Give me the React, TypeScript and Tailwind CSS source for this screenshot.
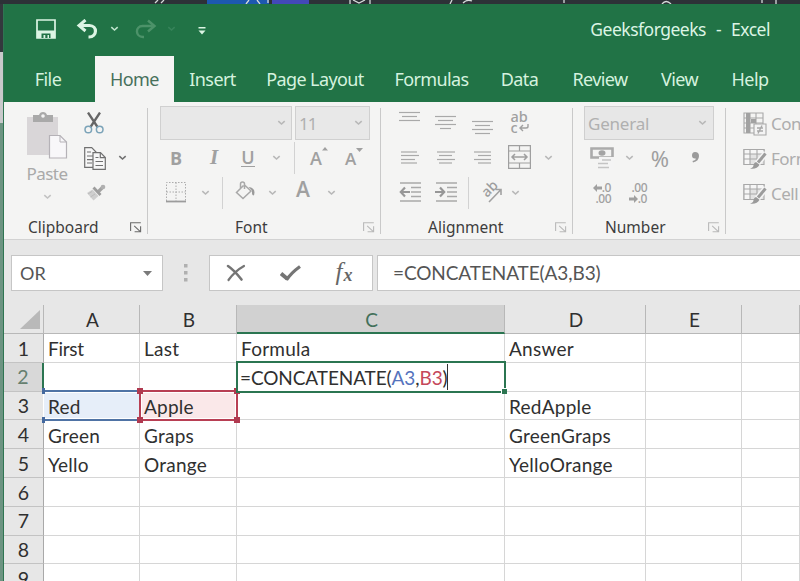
import type { ReactNode } from 'react'
import clsx from 'clsx'

const TABS = [
  { label: 'File', className: 'w-[91px] pr-[3px]' },
  { label: 'Home', className: 'w-[79px] bg-[#f4f4f3] text-[#47705b]', active: true },
  { label: 'Insert', className: 'w-[77px]' },
  { label: 'Page Layout', className: 'w-[128px]' },
  { label: 'Formulas', className: 'w-[105px]' },
  { label: 'Data', className: 'w-[71px]' },
  { label: 'Review', className: 'w-[90px]' },
  { label: 'View', className: 'w-[69px]' },
  { label: 'Help', className: 'w-[72px]' },
]

const COLUMNS = ['A', 'B', 'C', 'D', 'E', '']

const ROWS = [
  ['First', 'Last', 'Formula', 'Answer', '', ''],
  ['', '', '', '', '', ''],
  ['Red', 'Apple', '', 'RedApple', '', ''],
  ['Green', 'Graps', '', 'GreenGraps', '', ''],
  ['Yello', 'Orange', '', 'YelloOrange', '', ''],
  ['', '', '', '', '', ''],
  ['', '', '', '', '', ''],
  ['', '', '', '', '', ''],
  ['', '', '', '', '', ''],
]

const GRID = 'grid grid-cols-[40px_96px_97px_268px_141px_96px_58px]'

/* ---------- small building blocks ---------- */

function Chevron({ className = 'text-[#b8b8b8]' }: { className?: string }) {
  return (
    <svg width="9" height="6" viewBox="0 0 9 6" className={className} fill="none" stroke="currentColor" strokeWidth="1.600">
      <path d="M1.300 1.200l3.200 2.800 3.200-2.800" />
    </svg>
  )
}

function Slot({ className, children }: { className: string; children?: ReactNode }) {
  return <div className={clsx('flex h-full shrink-0 items-center justify-center', className)}>{children}</div>
}

function Divider() {
  return <div className="h-[32px] w-px bg-[#d2d2d2]" />
}

function Launcher({ className }: { className: string }) {
  return (
    <svg width="12" height="11" viewBox="0 0 12 11" className={className} fill="none" stroke="currentColor" strokeWidth="1.100">
      <path d="M.6 9V.8h10.200M4.200 3.800l5.600 5.400M10.600 4.200v5.600H4.600" />
    </svg>
  )
}

interface GroupProps {
  label: string
  className: string
  labelClass: string
  launcherClass?: string
  children: ReactNode
}

function Group({ label, className, labelClass, launcherClass = 'text-[#b9b9b9]', children }: GroupProps) {
  return (
    <div className={clsx('flex shrink-0 flex-col pt-1', className)}>
      {children}
      <div className="flex h-[29px] items-center justify-between pt-[6px] pr-[5px]">
        <span className={clsx("font-['Noto_Sans'] text-[15.5px] leading-none whitespace-nowrap text-[#3d3d3d]", labelClass)}>
          {label}
        </span>
        <Launcher className={launcherClass} />
      </div>
    </div>
  )
}

function GroupSeparator() {
  return <div className="mt-[6px] h-[126px] w-px shrink-0 bg-[#c9c9c9]" />
}

function Lines({ rows, height = 34 }: { rows: [number, number, number][]; height?: number }) {
  return (
    <svg width="24" height={height} viewBox={`0 0 24 ${height}`} className="text-[#a9a9a9]" stroke="currentColor" strokeWidth="1.200">
      {rows.map(([x1, x2, y]) => (
        <path key={y} d={`M${x1} ${y}H${x2}`} />
      ))}
    </svg>
  )
}

/* ---------- title bar ---------- */

function DesktopStrip() {
  return (
    <svg width="800" height="4" viewBox="0 0 800 4" className="block shrink-0" fill="none" stroke="#d6dada" strokeWidth="1.300">
      <path fill="#2d3137" stroke="none" d="M0 0h800v4H0z" />
      <path fill="#1d58b0" stroke="none" d="M207 0h62v4h-62z" />
      <path fill="#4348b8" stroke="none" d="M272 0h37v4h-37z" />
      <path d="M158 0l-3 3M164 0l-3 3M249 0l-3 4M257 0l3 4M268 0v3M350 0v4M370 0v4M353 0l6 3 6-3M452 0l-2 4M463 3q4-4 9-2M564 0v3M662 4q4-5 9 0M762 0v3M776 0v4" />
    </svg>
  )
}

function TitleBar() {
  return (
    <div className="flex h-[52px] items-center text-[#dcf5e4]">
      <svg width="20" height="20" viewBox="0 0 20 20" className="mb-[2px] ml-[32px]" fill="none" stroke="currentColor">
        <path strokeWidth="1.700" d="M1 1h18v18H1z" />
        <path fill="currentColor" stroke="none" d="M1 11.500h18V19H1z" />
        <path fill="#217346" stroke="none" d="M5.500 14.500h9V19h-9z" />
        <path fill="currentColor" stroke="none" d="M7.500 16h1.800v3H7.500zM11.500 16h1.500v3h-1.500z" />
      </svg>
      <svg width="23" height="20" viewBox="0 0 23 20" className="mb-[2px] ml-[20px]" fill="none" stroke="currentColor" strokeWidth="3.200">
        <path d="M4 6.500h9.500c8 .3 8 11-.5 11.500h-.5" />
        <path strokeWidth="3" d="M9.500 1L3 6.500l6.500 5.500" />
      </svg>
      <Chevron className="mb-[3px] ml-[11px] text-[#bfe5cd]" />
      <svg width="23" height="20" viewBox="0 0 23 20" className="mb-[2px] ml-[15px] text-[#4c9269]" fill="none" stroke="currentColor" strokeWidth="2.400">
        <path d="M20 7H8.500c-7.500 .3-7.500 10.500 .5 11h1" />
        <path d="M14 1.500L20.500 7 14 12.500" />
      </svg>
      <Chevron className="mb-[3px] ml-[10px] text-[#37835a]" />
      <svg width="8" height="8" viewBox="0 0 8 8" className="mt-[2px] ml-[22px]">
        <path fill="currentColor" d="M.5 0h7v1.400h-7zM.5 3.500h7L4 7.500z" />
      </svg>
      <div className="ml-auto flex pr-[30px] pb-px font-['Noto_Sans'] text-[17.500px] leading-none tracking-[-0.500px] whitespace-nowrap">
        <span>Geeksforgeeks</span>
        <span className="mx-[10px]">-</span>
        <span>Excel</span>
      </div>
    </div>
  )
}

function TabBar() {
  return (
    <div className="flex h-[46px]">
      {TABS.map((tab) => (
        <div
          key={tab.label}
          className={clsx(
            "flex shrink-0 items-center justify-center font-['Noto_Sans'] text-[18px] leading-none tracking-[-0.6px] whitespace-nowrap",
            !tab.active && 'text-[#d5f2df]',
            tab.className
          )}
        >
          {tab.label}
        </div>
      ))}
    </div>
  )
}

/* ---------- ribbon ---------- */

function ClipboardGroup() {
  return (
    <Group label="Clipboard" className="w-[143px]" labelClass="pl-[24px]" launcherClass="text-[#6a6a6a]">
      <div className="flex h-[104px]">
        <div className="flex w-[74px] flex-col items-center pt-[6px] pl-[12px] text-[#a9a9a9]">
          <svg width="42" height="47" viewBox="0 0 42 47" fill="none">
            <path fill="#d9d6d8" d="M1 5h31v38H1z" />
            <path fill="#a9a9a9" d="M7 3h6q1-3 4-3t4 3h6v7H7z" />
            <circle cx="17" cy="4" r="1.800" fill="#f4f4f4" />
            <path fill="#f8f7f9" stroke="#b5b2b7" strokeWidth="1.200" d="M23.500 23.500H34l6.500 6.500v16h-17z" />
            <path stroke="#b5b2b7" d="M34 23.500V30h6.500" />
          </svg>
          <span className="mt-[6px] font-['Noto_Sans'] text-[17px] leading-[18px] tracking-[-0.500px]">Paste</span>
          <Chevron className="mt-[11px] text-[#c2c2c2]" />
        </div>
        <div className="flex flex-col">
          <Slot className="max-h-[34px] w-[32px]">
            <svg width="20" height="22" viewBox="0 0 20 22" fill="none">
              <path stroke="#666" strokeWidth="2.300" d="M4 0.500l9.500 14.500M16 .5L6.500 15" />
              <circle cx="4.300" cy="17.500" r="3.300" stroke="#7ba3b8" strokeWidth="1.500" />
              <circle cx="15.700" cy="17.500" r="3.300" stroke="#7ba3b8" strokeWidth="1.500" />
            </svg>
          </Slot>
          <div className="flex h-[36px] items-center">
            <Slot className="w-[33px]">
              <svg width="22" height="23" viewBox="0 0 22 23" fill="#f7f7f7" stroke="#707070" strokeWidth="1.200">
                <path d="M.7.7h7l4.300 4.300v15.300H.7z" />
                <path d="M3 5h4M3 9h6M3 12.600h6M3 16h5" />
                <path d="M9 5.700h7.500l4.800 4.800v11.800H9z" />
                <path fill="none" d="M16.300 5.700v5h5M11.500 10.500h3M11.500 14.500h7.500M11.500 18.500h7.500" />
              </svg>
            </Slot>
            <Slot className="w-[22px]">
              <Chevron className="text-[#707070]" />
            </Slot>
          </div>
          <Slot className="max-h-[32px] w-[36px]">
            <svg width="20" height="17" viewBox="0 0 20 17">
              <path stroke="#a3a3a3" strokeWidth="3.400" d="M12.500 7.500l3.500-3.500" />
              <circle cx="17" cy="3" r="2.300" fill="#b0b0b0" />
              <path stroke="#9d9d9d" strokeWidth="2.800" d="M7.500 3.500l7 7.500" />
              <path fill="#cfcfcf" d="M6.500 5.500l6 6.500-5 4.500L1 9z" />
              <path stroke="#bcbcbc" d="M2 10l4-2.500M4.500 13l4.500-3" />
            </svg>
          </Slot>
        </div>
      </div>
    </Group>
  )
}

function FontGroup() {
  return (
    <Group label="Font" className="w-[232px]" labelClass="pl-[87px]">
      <div className="flex h-[34px] gap-[3px] pl-[12px] text-[#b0b0b0]">
        <div className="flex w-[132px] items-center justify-end border border-[#d0d0d0] bg-[#e8e8e8] pr-[5px]">
          <Chevron />
        </div>
        <div className="flex w-[75px] items-center justify-between border border-[#d0d0d0] bg-[#e8e8e8] pr-[6px] pl-[3px]">
          <span className="font-['Noto_Sans'] text-[17px] leading-none tracking-[-1px]">11</span>
          <Chevron />
        </div>
      </div>
      <div className="flex h-[36px] items-center pl-[12px] text-[#a0a0a0]">
        <Slot className="w-[32px] font-['Open_Sans'] text-[18px] font-bold">B</Slot>
        <Slot className="w-[44px] font-['Liberation_Serif'] text-[21px] font-bold italic">I</Slot>
        <Slot className="w-[24px]">
          <span className="border-b border-[#a0a0a0] font-['Open_Sans'] text-[18px] leading-[17px] font-semibold">U</span>
        </Slot>
        <Slot className="w-[32px]">
          <Chevron />
        </Slot>
        <Slot className="w-[4px]">
          <Divider />
        </Slot>
        <Slot className="w-[46px] font-['Open_Sans'] text-[18px] font-semibold">
          A
          <svg width="6" height="4" viewBox="0 0 6 4" className="mb-[18px]">
            <path fill="currentColor" d="M0 3.500L3 0l3 3.500z" />
          </svg>
        </Slot>
        <Slot className="w-[24px] pt-px font-['Open_Sans'] text-[17px] font-semibold">
          A
          <svg width="7" height="4" viewBox="0 0 7 4" className="mb-[18px]">
            <path fill="currentColor" d="M0 0h7L3.500 4z" />
          </svg>
        </Slot>
      </div>
      <div className="flex h-[34px] items-center pl-[12px] text-[#a0a0a0]">
        <Slot className="w-[32px] pb-[3px]">
          <svg width="22" height="22" viewBox="0 0 22 22" fill="none" stroke="#acacac">
            <path strokeDasharray="1.500 1.500" d="M1.500 20V1.500h19V20M11 1.500V20M1.500 11h19" />
            <path stroke="#9c9c9c" strokeWidth="1.800" d="M1 20.500h20" />
          </svg>
        </Slot>
        <Slot className="w-[26px]">
          <Chevron />
        </Slot>
        <Slot className="w-[8px]">
          <Divider />
        </Slot>
        <Slot className="w-[38px] pb-[5px]">
          <svg width="20" height="19" viewBox="0 0 20 19" fill="none" stroke="#a8a8a8" strokeWidth="1.500">
            <path d="M8.500 4.500L1.500 11.500l6.500 6 8-7.500-7-6.500M5.500 8V3q0-2 2-2t2 2v5" />
            <path fill="#9a9a9a" stroke="none" d="M13.500 6q6 .5 6 5.500 0 2.500-1.300 3-1.400-.2-1.200-5z" />
          </svg>
        </Slot>
        <Slot className="w-[16px]">
          <Chevron />
        </Slot>
        <Slot className="w-[46px] pb-[6px] font-['Open_Sans'] text-[21px] font-semibold">A</Slot>
        <Slot className="w-[10px]">
          <Chevron />
        </Slot>
      </div>
    </Group>
  )
}

function IndentIcon({ outward }: { outward?: boolean }) {
  return (
    <svg width="23" height="22" viewBox="0 0 23 22" fill="none" stroke="#a9a9a9" strokeWidth="1.300">
      <path d="M1 2h21M12 6.500h10M12 11h10M12 15.500h10M1 20h21" />
      <path stroke="#979797" strokeWidth="2.200" d={outward ? 'M2 11h9M6 6.500L1.800 11 6 15.500' : 'M0 11h9M5 6.500L9.200 11 5 15.500'} />
    </svg>
  )
}

function AlignmentGroup() {
  return (
    <Group label="Alignment" className="w-[191px]" labelClass="pl-[47px]">
      <div className="flex h-[34px] pl-[11px]">
        <Slot className="w-[36px]">
          <Lines rows={[[1, 22, 6.5], [4, 19, 10.5], [1, 22, 14.5]]} />
        </Slot>
        <Slot className="w-[36px]">
          <Lines rows={[[1, 22, 10.5], [4, 19, 14.5], [1, 22, 18.5], [6, 17, 22.5]]} />
        </Slot>
        <Slot className="w-[37px]">
          <Lines rows={[[1, 22, 15.5], [4, 19, 19.5], [1, 22, 23.5], [4, 19, 27.5]]} />
        </Slot>
        <Slot className="w-[37px] pb-[3px]">
          <div className="font-['Noto_Sans'] text-[14.500px] leading-[11px] font-medium text-[#a0a0a0]">
            <div>ab</div>
            <div className="flex items-center">
              c
              <svg width="10" height="8" viewBox="0 0 10 8" className="mt-[2px] ml-px" fill="none" stroke="currentColor" strokeWidth="1.400">
                <path d="M9 0v2.500q0 1.500-2 1.500H1M4 1L1 4l3 3" />
              </svg>
            </div>
          </div>
        </Slot>
      </div>
      <div className="flex h-[36px] pl-[11px]">
        <Slot className="w-[36px]">
          <Lines height={36} rows={[[3, 19, 12], [3, 21, 15.5], [3, 17, 19.5], [3, 19, 23]]} />
        </Slot>
        <Slot className="w-[36px]">
          <Lines height={36} rows={[[3, 21, 12], [5, 18, 15.5], [3, 21, 19.5], [5, 18, 23]]} />
        </Slot>
        <Slot className="w-[37px]">
          <Lines height={36} rows={[[3, 20, 12], [7, 20, 15.5], [3, 20, 19.5], [7, 20, 23]]} />
        </Slot>
        <Slot className="w-[37px] pb-[2px]">
          <svg width="23" height="24" viewBox="0 0 23 24" fill="none" stroke="#9f9f9f" strokeWidth="1.200">
            <path d="M.6 .6h21.800v22.800H.6zM.6 6h21.800M.6 18h21.800M11.500 .6V6M11.500 18v5.400" />
            <path strokeWidth="1.500" d="M4 12h15M7 9l-3 3 3 3M16 9l3 3-3 3" />
          </svg>
        </Slot>
        <Slot className="w-[20px]">
          <Chevron />
        </Slot>
      </div>
      <div className="flex h-[34px] items-center pl-[11px]">
        <Slot className="w-[36px] pb-[2px]">
          <IndentIcon outward />
        </Slot>
        <Slot className="w-[36px] pb-[2px]">
          <IndentIcon />
        </Slot>
        <Slot className="w-[8px]">
          <Divider />
        </Slot>
        <Slot className="w-[38px] pb-[3px]">
          <svg width="24" height="22" viewBox="0 0 24 22" fill="none">
            <text x="0" y="0" transform="translate(8 17) rotate(-45)" fontFamily="Noto Sans" fontSize="14" fontWeight="500" fill="#9d9d9d">
              ab
            </text>
            <path stroke="#a2a2a2" strokeWidth="1.600" d="M10 21L21.500 9M16.500 8.500H22v5.500" />
          </svg>
        </Slot>
        <Slot className="w-[10px]">
          <Chevron />
        </Slot>
      </div>
    </Group>
  )
}

function DecimalArrow({ flip }: { flip?: boolean }) {
  return (
    <svg width="9" height="8" viewBox="0 0 9 8" className={clsx(flip && 'rotate-180')}>
      <path fill="#a0a0a0" d="M0 4l4-4v2.500h5v3H4V8z" />
    </svg>
  )
}

function NumberGroup() {
  return (
    <Group label="Number" className="w-[152px]" labelClass="pl-[32px]">
      <div className="flex h-[34px] pl-[11px]">
        <div className="flex w-[130px] items-center justify-between border border-[#cfcfcf] bg-[#e7e7e7] pr-[6px] pl-[3px] text-[#b0b0b0]">
          <span className="font-['Noto_Sans'] text-[17px] leading-none tracking-[-0.2px]">General</span>
          <Chevron />
        </div>
      </div>
      <div className="flex h-[36px] items-center pl-[11px] text-[#9f9f9f]">
        <Slot className="w-[35px]">
          <svg width="24" height="24" viewBox="0 0 24 24" fill="none" stroke="#ababab">
            <path strokeWidth="2.600" d="M1.500 2.500h21v9h-21z" />
            <ellipse cx="12" cy="7" rx="3.500" ry="2.800" fill="#a4a4a4" stroke="none" />
            <path fill="#f4f4f4" stroke="none" d="M9 11h15v13H9z" />
            <path strokeWidth="1.500" stroke="#c4c4c4" d="M12 14h9M8 17.500h10M8 21.500h11" />
          </svg>
        </Slot>
        <Slot className="w-[20px]">
          <Chevron />
        </Slot>
        <Slot className="w-[42px] font-['Noto_Sans'] text-[22px]">%</Slot>
        <Slot className="w-[29px]">
          <svg width="9" height="11" viewBox="0 0 9 11" className="mb-px">
            <path fill="#9a9a9a" d="M4 0q4 0 4 4 0 5-6 6.500L1.500 9Q5 8 4.800 6.500 1 7 1 3.500 1 0 4 0z" />
          </svg>
        </Slot>
      </div>
      <div className="flex h-[34px] items-center pl-[10px] font-['Noto_Sans'] text-[12px] leading-[11px] font-medium text-[#a0a0a0]">
        <Slot className="w-[28px] flex-col items-end">
          <span className="flex items-center tracking-[-0.500px]">
            <DecimalArrow />
            .0
          </span>
          <span className="tracking-[-0.500px]">.00</span>
        </Slot>
        <Slot className="ml-[8px] w-[28px] flex-col items-end">
          <span className="tracking-[-0.500px]">.00</span>
          <span className="flex items-center tracking-[-0.500px]">
            <DecimalArrow flip />
            .0
          </span>
        </Slot>
      </div>
    </Group>
  )
}

function StyleIcon({ conditional }: { conditional?: boolean }) {
  if (conditional) {
    return (
      <svg width="24" height="24" viewBox="0 0 24 24" fill="none" stroke="#a8a8a8" strokeWidth="1.100">
        <path d="M1 1h19v20H1zM1 6h19M1 11h19M1 16h19M7 1v20M13 1v20" />
        <path fill="#a2a2a2" stroke="none" d="M3 1h4v20H3zM8 7h5v4H8z" />
        <path fill="#f4f4f4" d="M11 12h12v11H11z" />
        <path strokeWidth="1.400" d="M14 16h6M14 19h6M19 13.500l-4 8" />
      </svg>
    )
  }
  return (
    <svg width="24" height="22" viewBox="0 0 24 22" fill="none" stroke="#a8a8a8" strokeWidth="1.100">
      <path fill="#e3e3e3" d="M1 1.500h20v15H1z" />
      <path fill="#f6f6f6" d="M1 1.500h20v4.500H1zM1 6h6v10.500H1zM1 11h18M7 1.500v15M14 1.500v15" />
      <path stroke="#f4f4f4" strokeWidth="6" d="M23 5l-9 11" />
      <path stroke="#9c9c9c" strokeWidth="3" d="M22.500 5.500l-7.500 9" />
      <path fill="#9a9a9a" stroke="none" d="M13 14l3.500 2.800Q14 21.500 7 20.500q3.500-1 3.500-3.500 .5-2.500 2.500-3z" />
    </svg>
  )
}

function StylesGroup() {
  const items = ['Conditional Formatting', 'Format as Table', 'Cell Styles']
  return (
    <div className="flex w-[74px] shrink-0 flex-col overflow-hidden pt-1 pl-[17px]">
      {items.map((item, i) => (
        <div
          key={item}
          className="flex h-[35px] items-center gap-[4px] font-['Noto_Sans'] text-[17px] tracking-[-0.500px] whitespace-nowrap text-[#adadad]"
        >
          <span className="shrink-0">
            <StyleIcon conditional={i === 0} />
          </span>
          {item}
        </div>
      ))}
    </div>
  )
}

/* ---------- formula bar ---------- */

function FormulaBar() {
  return (
    <div className="flex h-[66px] items-start border-t border-[#d2d2d2] bg-[#e7e7e7] pt-[15px] pl-[7px] font-['Lato'] text-[#555]">
      <div className="flex h-[36px] w-[152px] items-center justify-between border border-[#c6c6c6] bg-white pr-[10px] pl-[8px] text-[18px]">
        OR
        <svg width="9" height="5" viewBox="0 0 9 5">
          <path fill="#7a7a7a" d="M0 0h9L4.500 5z" />
        </svg>
      </div>
      <svg width="4" height="18" viewBox="0 0 4 18" className="mt-[9px] ml-[21px]" fill="#b0b0b0">
        <path d="M0 0h3.500v3.500H0zM0 7h3.500v3.500H0zM0 14h3.500v3.500H0z" />
      </svg>
      <div className="ml-[21px] flex h-[36px] w-[164px] items-center border border-[#c6c6c6] bg-white">
        <Slot className="w-[52px]">
          <svg width="20" height="18" viewBox="0 0 20 18" fill="none" stroke="#757575" strokeLinecap="round">
            <path strokeWidth="2.600" d="M2 2q6 4 13.500 13.500" />
            <path strokeWidth="2.200" d="M18 2Q9 7 2.500 16" />
          </svg>
        </Slot>
        <Slot className="w-[56px]">
          <svg width="21" height="17" viewBox="0 0 21 17" fill="none" stroke="#757575">
            <path strokeWidth="3.800" d="M1 8.500l6.500 5.500" />
            <path strokeWidth="3.200" d="M6.500 15Q11 8 20 1.500" />
          </svg>
        </Slot>
        <Slot className="w-[52px] pb-[3px] font-['Liberation_Serif'] text-[25px] text-[#666] italic">
          f<span className="pt-[7px] pl-px text-[18px] font-bold">x</span>
        </Slot>
      </div>
      <div className="ml-[4px] flex h-[36px] flex-1 items-center border border-r-0 border-[#c6c6c6] bg-white pl-[15px] text-[19px] tracking-[-0.100px]">
        =CONCATENATE(A3,B3)
      </div>
    </div>
  )
}

/* ---------- sheet ---------- */

function ActiveCellEditor() {
  return (
    <div className="absolute -top-[2px] -left-[1px] z-20 flex h-[32px] w-[270px] items-center border-2 border-[#2b7551] bg-white pt-px pl-[2px]">
      <span className="tracking-[-0.100px] whitespace-nowrap">
        =CONCATENATE(<span className="text-[#5573bd]">A3</span>,<span className="text-[#c5485b]">B3</span>)
      </span>
      <span className="-ml-px h-[26px] w-[1.500px] shrink-0 bg-[#333]" />
      <span className="absolute -right-[3px] -bottom-[3px] size-[6px] border-t border-l border-white bg-[#2b7551]" />
    </div>
  )
}

function RangeOutline({ tone }: { tone: 'blue' | 'red' }) {
  const red = tone === 'red'
  const handle = red ? 'bg-[#b03a50]' : 'bg-[#44699f]'
  return (
    <div
      className={clsx(
        'absolute -top-[2px] -left-[1px] h-[31px] border-2 shadow-[inset_0_0_0_1px_#fff]',
        red ? 'z-10 w-[99px] border-[#b83f54]' : 'w-[98px] border-x-0 border-[#4f73a5]'
      )}
    >
      <span className={clsx('absolute -top-[4px] -left-[4px] h-[6px]', handle, red ? 'w-[6px]' : 'ml-[3px] w-[3px]')} />
      <span className={clsx('absolute -bottom-[4px] -left-[4px] h-[6px]', handle, red ? 'w-[6px]' : 'ml-[3px] w-[3px]')} />
      {red && <span className="absolute -top-[4px] -right-[4px] size-[6px] bg-[#b03a50]" />}
      {red && <span className="absolute -right-[4px] -bottom-[4px] size-[6px] bg-[#b03a50]" />}
    </div>
  )
}

function Sheet() {
  return (
    <div className="flex-1 overflow-hidden bg-white font-['Lato'] text-[19px] leading-none text-[#303030]">
      <div className={clsx(GRID, 'h-[29px] bg-[#e7e7e7]')}>
        <div className="flex items-end justify-end border-r border-b border-[#b8b8b8] pr-[3px] pb-[4px]">
          <svg width="20" height="19" viewBox="0 0 20 19">
            <path fill="#b9b9b9" d="M20 0v19H0z" />
          </svg>
        </div>
        {COLUMNS.map((name) => (
          <div
            key={name}
            className={clsx(
              'flex items-center justify-center border-r pt-px pl-[2px]',
              name === 'C'
                ? 'border-b-2 border-r-[#b8b8b8] border-b-[#2b7551] bg-[#d1d1d1] text-[#43705a]'
                : 'border-b border-[#b8b8b8]'
            )}
          >
            {name}
          </div>
        ))}
      </div>
      {ROWS.map((cells, r) => (
        <div key={r} className={clsx(GRID, 'h-[28.800px]')}>
          <div
            className={clsx(
              'flex items-center justify-center border-b border-[#c3c3c3] pt-px text-[19.500px]',
              r === 1
                ? 'border-r-2 border-r-[#2b7551] bg-[#d8d8d8] text-[#66806f]'
                : 'border-r border-r-[#a9a9a9] bg-[#e7e7e7]'
            )}
          >
            {r + 1}
          </div>
          {cells.map((value, c) => (
            <div
              key={c}
              className={clsx(
                'relative flex items-center border-r border-b border-[#d6d6d6] pt-[2px] pl-[4px] whitespace-nowrap',
                value === 'First' ? 'tracking-[-0.300px]' : 'tracking-[0.250px]',
                r === 2 && c === 0 && 'bg-[#e6eef9]',
                r === 2 && c === 1 && 'bg-[#fae8e9]'
              )}
            >
              {value}
              {r === 1 && c === 2 && <ActiveCellEditor />}
              {r === 2 && c === 0 && <RangeOutline tone="blue" />}
              {r === 2 && c === 1 && <RangeOutline tone="red" />}
            </div>
          ))}
        </div>
      ))}
    </div>
  )
}

export default function App() {
  return (
    <div className="flex h-[581px] w-[800px] flex-col overflow-hidden">
      <DesktopStrip />
      <div className="flex min-h-0 flex-1">
        <div className="flex w-[4px] shrink-0 flex-col border-r border-[#2f7552]">
          <div className="h-[48px] bg-[#33383d]" />
          <div className="h-[71px] bg-[#c9c9cb]" />
          <div className="flex-1 bg-[#6d9482]" />
        </div>
        <div className="flex w-[796px] flex-col">
          <div className="bg-[#217346]">
            <TitleBar />
            <TabBar />
          </div>
          <div className="flex h-[137px] shrink-0 overflow-hidden bg-[#f4f4f3]">
            <ClipboardGroup />
            <GroupSeparator />
            <FontGroup />
            <GroupSeparator />
            <AlignmentGroup />
            <GroupSeparator />
            <NumberGroup />
            <GroupSeparator />
            <StylesGroup />
          </div>
          <FormulaBar />
          <Sheet />
        </div>
      </div>
    </div>
  )
}
